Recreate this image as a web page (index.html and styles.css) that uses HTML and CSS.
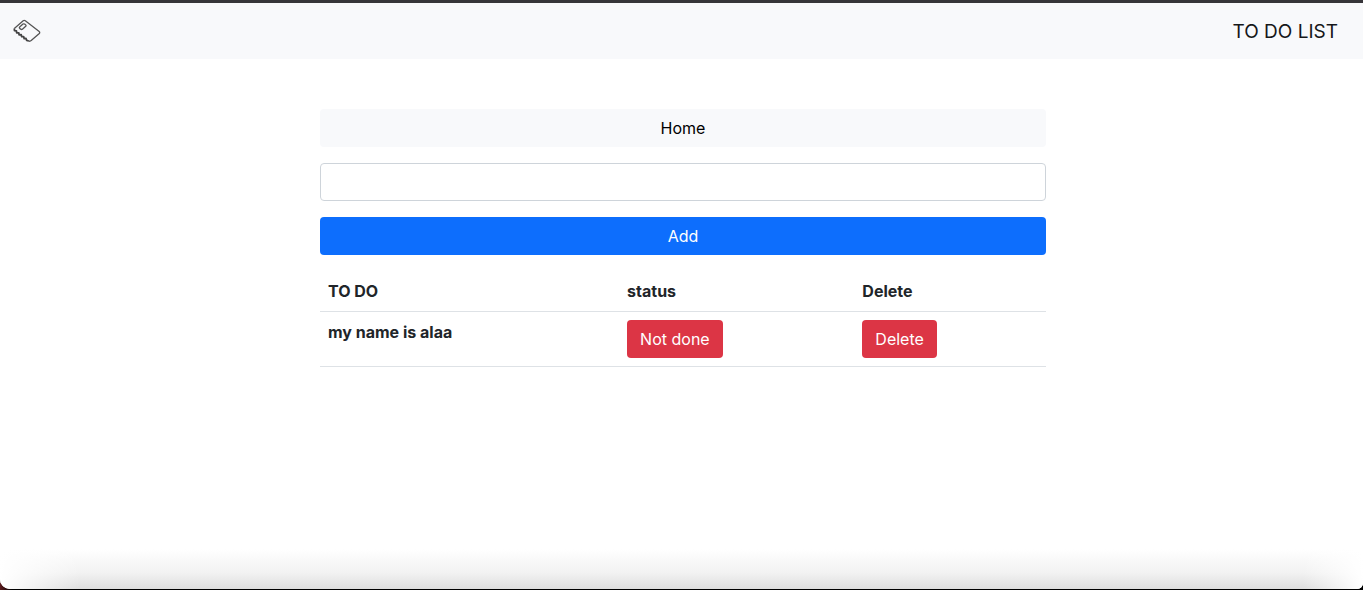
FILE: index.html
```html
<!DOCTYPE html>
<html lang="en">
<head>
<meta charset="utf-8">
<meta name="viewport" content="width=device-width, initial-scale=1">
<title>To do list</title>
<link rel="stylesheet" href="styles.css">
</head>
<body>
<div class="window">
  <nav class="navbar">
    <svg class="logo" viewBox="0 0 28 24" aria-hidden="true">
      <path class="logo-cover" d="M1.3 9.5 10.2 1.8Q11.2 1 12.3 1.8L26.2 12.6Q27.2 13.5 26.3 14.5L18.2 21.6Q17 22.6 15.6 22"/>
      <path class="logo-cover" d="M6.6 8.1 10 5.1Q10.8 4.5 11.6 5.1L12.7 6Q13.4 6.6 12.7 7.3L9.4 10.2Q8.6 10.8 7.8 10.2L6.7 9.4Q6 8.7 6.6 8.1Z"/>
      <path class="logo-edge" d="M1.3 9.5 1.5 11.7 3.4 11.8 3.7 13.8 5.8 13.8 6.1 15.8 8.2 15.7 8.7 17.7 10.6 17.6 11.2 19.7 13 19.5 13.7 21.4 15.8 22"/>
    </svg>
    <a class="brand" href="#">TO DO LIST</a>
  </nav>
  <main class="content">
    <div class="panel">
      <a class="btn btn-light" href="#">Home</a>
      <form class="add-form">
        <input class="field" type="text" aria-label="New to do">
        <button class="btn btn-primary" type="button">Add</button>
      </form>
      <table class="tasks">
        <thead>
          <tr><th class="col-task" scope="col">TO DO</th><th class="col-status" scope="col">status</th><th scope="col">Delete</th></tr>
        </thead>
        <tbody>
          <tr>
            <th scope="row">my name is alaa</th>
            <td><button class="btn btn-danger" type="button">Not done</button></td>
            <td><button class="btn btn-danger" type="button">Delete</button></td>
          </tr>
        </tbody>
      </table>
    </div>
  </main>
  <div class="bottom-shade"></div>
</div>
</body>
</html>
```
FILE: styles.css
```css
* { box-sizing: border-box; }

body {
  margin: 0;
  background: linear-gradient(90deg, #5a1a1c 0, #000 12px);
  color: #212529;
  font: 400 16px/24px Inter, "Liberation Sans", sans-serif;
}

.window {
  display: flex;
  flex-direction: column;
  min-height: calc(100vh - 1px);
  overflow: hidden;
  border-top: 3px solid #363539;
  border-radius: 0 0 6px 10px;
  background: #fff;
}

.navbar {
  display: flex;
  align-items: center;
  justify-content: space-between;
  height: 56px;
  padding: 0 25px 0 13px;
  background: #f8f9fb;
}

.logo { width: 28px; height: 24px; }
.logo-cover { fill: none; stroke: #555; stroke-width: 1.3; stroke-linejoin: round; }
.logo-edge { fill: none; stroke: #444; stroke-width: 1.8; stroke-linejoin: round; }

.brand {
  padding-top: 2px;
  color: #151719;
  font-size: 19px;
  line-height: 30px;
  text-decoration: none;
}

.content {
  flex: 1;
  padding: 50px 0 0 3px;
}

.panel {
  display: flex;
  flex-direction: column;
  gap: 16px;
  width: 100%;
  max-width: 726px;
  margin: 0 auto;
}

.add-form { display: grid; gap: 16px; }

.field {
  width: 100%;
  height: 38px;
  padding: 6px 12px;
  border: 1px solid #ced4da;
  border-radius: 4px;
  background: #fff;
  font: inherit;
}

.btn {
  padding: 6px 12px;
  border: 1px solid transparent;
  border-radius: 4px;
  font: inherit;
  text-align: center;
  text-decoration: none;
  cursor: pointer;
}
.btn-light { background: #f8f9fb; color: #000; }
.btn-primary { background: #0d6efd; color: #fff; }
.btn-danger { background: #dc3545; color: #fff; }

.tasks {
  width: 100%;
  border-collapse: collapse;
  table-layout: fixed;
}
.tasks th,
.tasks td {
  padding: 8px;
  border-bottom: 1px solid #dee2e6;
  text-align: left;
  vertical-align: top;
}
.tasks th { font-weight: 700; }
.tasks .btn { display: block; }
.col-task { width: 41.2%; }
.col-status { width: 32.4%; }

.bottom-shade {
  height: 40px;
  background:
    linear-gradient(90deg, #fff, transparent 80px calc(100% - 60px), #fff),
    linear-gradient(#fff, #f2f2f2 60%, #dedede);
}
```
